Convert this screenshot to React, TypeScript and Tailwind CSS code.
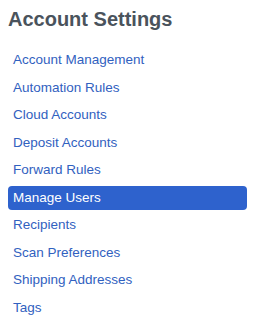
import React from "react";

const items = [
  "Account Management",
  "Automation Rules",
  "Cloud Accounts",
  "Deposit Accounts",
  "Forward Rules",
  "Manage Users",
  "Recipients",
  "Scan Preferences",
  "Shipping Addresses",
  "Tags",
];

export default function App() {
  return (
    <div
      className="w-[254px] h-[324px] bg-white overflow-hidden"
      style={{ fontFamily: '"Liberation Sans", Arial, sans-serif' }}
    >
      <h1 className="pt-[7px] pl-[8px] text-[20px] leading-[24px] font-bold text-[#4a535c]">
        Account Settings
      </h1>
      <ul className="mt-[17px] ml-[8px] mr-[7px] flex flex-col gap-[3.5px]">
        {items.map((it) => {
          const active = it === "Manage Users";
          return (
            <li
              key={it}
              className={
                active
                  ? "h-[24px] leading-[24px] pl-[5px] rounded-[4px] bg-[#2e62cd] text-white text-[13.5px]"
                  : "h-[24px] leading-[24px] pl-[5px] text-[#3161c0] text-[13.5px]"
              }
            >
              {it}
            </li>
          );
        })}
      </ul>
    </div>
  );
}
